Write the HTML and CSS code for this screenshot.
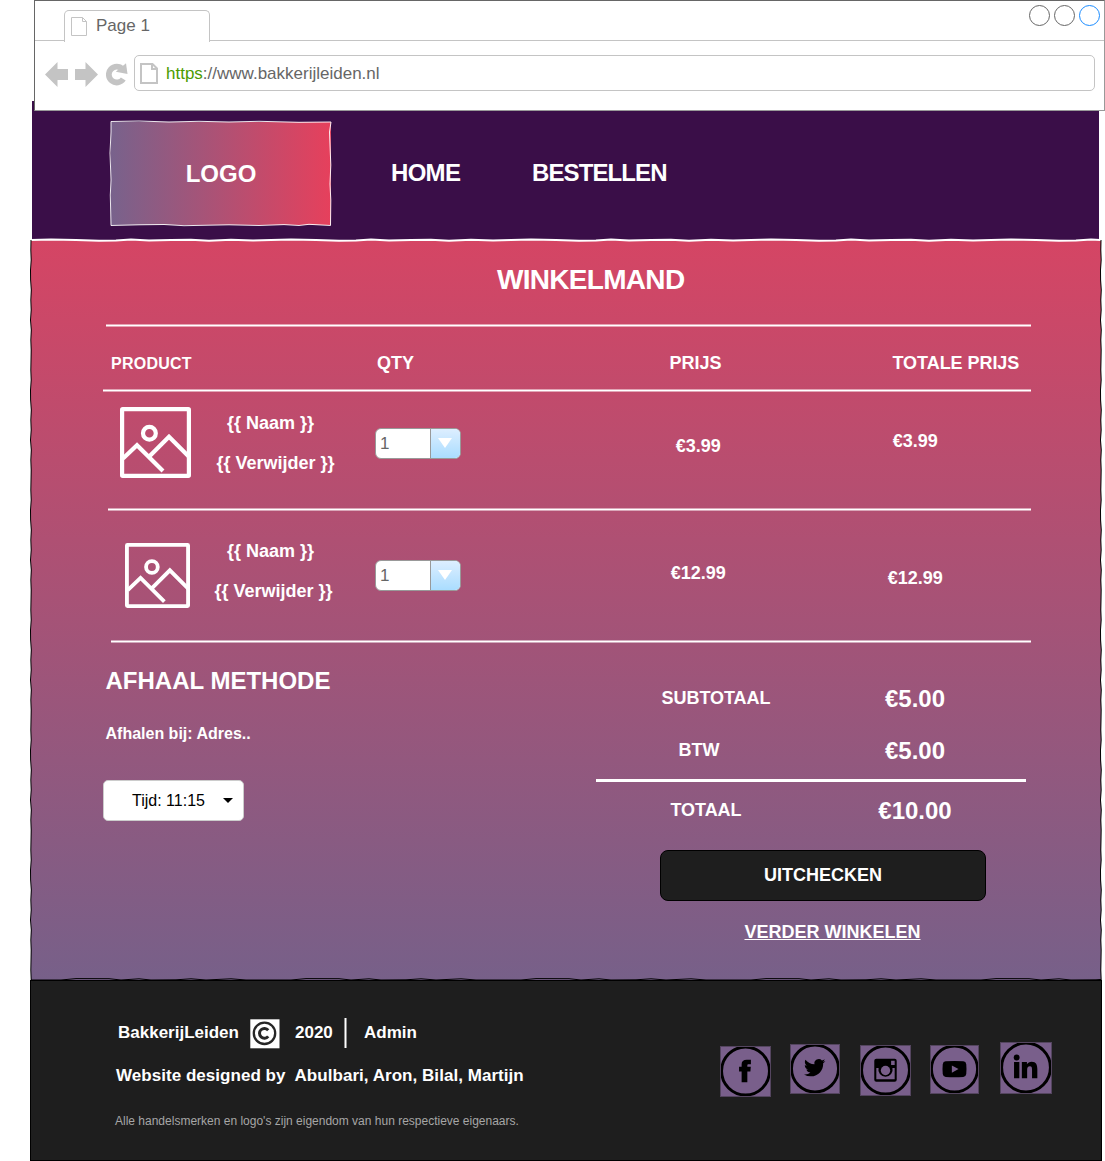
FILE: index.html
```html
<!DOCTYPE html>
<html lang="nl">
<head>
<meta charset="utf-8">
<title>Bakkerij Leiden - Winkelmand</title>
<link rel="stylesheet" href="styles.css">
</head>
<body>
<svg class="defs" width="0" height="0">
  <defs>
    <symbol id="picture" viewBox="0 0 71 71">
      <g fill="none" stroke="#fff" stroke-width="4.2">
        <rect x="2.1" y="2.1" width="66.8" height="66.8" rx=".6"/>
        <circle cx="29.4" cy="26.2" r="6.4"/>
        <path d="M3 51.5 17 38.2 43 64M29.5 49.2 49 29.8 69 49.8"/>
      </g>
    </symbol>
    <pattern id="rough-dark" width="5" height="120" patternUnits="userSpaceOnUse">
      <path d="M2 0 1.8 10 2.200 20 1.500 30 1.600 40 2.300 50 1.800 60 2.200 70 1.500 80 2.300 90 1.800 100 2.200 110 2 120" fill="none" stroke="#000" stroke-width="1"/>
    </pattern>
    <pattern id="rough-white" width="240" height="6" patternUnits="userSpaceOnUse">
      <path d="M0 3 20 2.6 45 2.9 68 3.8 85 3.6 100 2.6 118 3.4 140 3 160 2.8 178 3.7 200 2.7 222 3.5 240 3" fill="none" stroke="#fff" stroke-width="2"/>
    </pattern>
    <pattern id="rough-foot" width="230" height="3" patternUnits="userSpaceOnUse">
      <path d="M0 3 30 3 45 1.6 78 1.7 90 3 108 1.8 120 3 145 2.8 160 1.8 175 3 200 1.8 215 3 230 3" fill="none" stroke="#000" stroke-width="1"/>
    </pattern>
  </defs>
</svg>

<div class="browser">
  <div class="tabs">
    <div class="tab">
      <svg width="16" height="19" viewBox="0 0 16 19" fill="none" stroke="#c4c4c4"><path d="M.5.5h11l4 4v14H.5zM11.5.5v4h4"/></svg>
      <span>Page 1</span>
    </div>
    <div class="window-buttons">
      <i></i><i></i><i class="active"></i>
    </div>
  </div>
  <div class="toolbar">
    <svg class="arrow" width="23" height="25" viewBox="0 0 23 25"><path fill="#c4c4c4" d="M0 12.5 12.5 0v7H23v11H12.5v7z"/></svg>
    <svg class="arrow" width="23" height="25" viewBox="0 0 23 25"><path fill="#c4c4c4" d="M23 12.5 10.500 0v7H0v11h10.500v7z"/></svg>
    <svg class="reload" width="22" height="23" viewBox="0 0 22 23"><path d="M17.300 16A7.900 7.900 0 1 1 16.500 6.200" fill="none" stroke="#c4c4c4" stroke-width="5.800"/><path fill="#c4c4c4" d="M20 .300 21.500 11 9.800 8.700z"/></svg>
    <div class="address">
      <svg width="18" height="21" viewBox="0 0 18 21" fill="none" stroke="#c4c4c4" stroke-width="2"><path d="M1 1h11.500L17 5.500V20H1zM12 1v5h5"/></svg>
      <span><b>https</b>://www.bakkerijleiden.nl</span>
    </div>
  </div>
</div>

<div class="site">
  <header class="header">
    <a class="logo">LOGO
      <svg class="logo-edge" width="223" height="107" viewBox="0 0 223 107" fill="none" stroke="#fff" stroke-opacity=".9"><path d="M2 1.500 30 1 60 2 90 1.300 120 2 150 1.300 190 2.300 222 2 220.500 12 221.800 45 221 64 221.800 80 221.500 105.500 200 104.300 190 105.500 175 104.600 150 105.500 120 104.800 75 105.700 55 104.500 30 104.800 2 105.500 1.300 75 2 60 1 33 2 12z"/></svg>
    </a>
    <nav class="nav">
      <a class="home">HOME</a>
      <a class="order">BESTELLEN</a>
    </nav>
  </header>

  <main class="main">
    <svg class="edge-top" width="1070" height="6"><rect width="1070" height="6" fill="url(#rough-white)"/></svg>
    <svg class="edge-left" width="5" height="740"><rect width="5" height="740" fill="url(#rough-dark)"/></svg>
    <svg class="edge-right" width="5" height="740"><rect width="5" height="740" fill="url(#rough-dark)"/></svg>
    <svg class="edge-bottom" width="1070" height="3"><rect width="1070" height="3" fill="url(#rough-foot)"/></svg>

    <h1>WINKELMAND</h1>

    <section class="cart">
      <div class="rule rule-top"></div>
      <div class="row head">
        <span class="product">PRODUCT</span><span></span>
        <span class="h-qty">QTY</span>
        <span class="h-price">PRIJS</span>
        <span class="h-total">TOTALE PRIJS</span>
      </div>
      <div class="rule rule-head"></div>
      <div class="row item first">
        <svg class="thumb"><use href="#picture"/></svg>
        <div class="names"><span>{{ Naam }}</span><span class="remove">{{ Verwijder }}</span></div>
        <div class="qty"><span>1</span><i><svg width="14" height="10" viewBox="0 0 14 10"><path d="M0 0h14L7 10z" fill="#fff"/></svg></i></div>
        <span class="price">€3.99</span>
        <span class="total">€3.99</span>
      </div>
      <div class="rule rule-item"></div>
      <div class="row item second">
        <svg class="thumb"><use href="#picture"/></svg>
        <div class="names"><span>{{ Naam }}</span><span class="remove">{{ Verwijder }}</span></div>
        <div class="qty"><span>1</span><i><svg width="14" height="10" viewBox="0 0 14 10"><path d="M0 0h14L7 10z" fill="#fff"/></svg></i></div>
        <span class="price">€12.99</span>
        <span class="total">€12.99</span>
      </div>
      <div class="rule rule-last"></div>
    </section>

    <div class="bottom">
      <section class="pickup">
        <h2>AFHAAL METHODE</h2>
        <p>Afhalen bij: Adres..</p>
        <div class="time"><span>Tijd: 11:15</span><svg width="10" height="5" viewBox="0 0 10 5"><path d="M0 0h10L5 5z"/></svg></div>
      </section>
      <section class="summary">
        <div class="sum"><span>SUBTOTAAL</span><strong>€5.00</strong></div>
        <div class="sum tax"><span>BTW</span><strong>€5.00</strong></div>
        <div class="sum-rule"></div>
        <div class="sum grand"><span>TOTAAL</span><strong>€10.00</strong></div>
        <a class="checkout">UITCHECKEN</a>
        <a class="continue">VERDER WINKELEN</a>
      </section>
    </div>
  </main>

  <footer class="footer">
    <div class="credits">
      <div class="line">
        <span class="brand">BakkerijLeiden</span>
        <svg class="copy" width="30" height="30" viewBox="0 0 30 30"><path fill="#fff" d="M.300.300h29.200v29H.300z"/><g fill="none" stroke="#262626"><circle cx="14.500" cy="14.300" r="10.700" stroke-width="2.300"/><path d="M18.200 11.200A4.900 4.900 0 1 0 18.200 17.400" stroke-width="3"/></g></svg>
        <span class="year">2020</span>
        <i class="sep"></i>
        <span class="admin">Admin</span>
      </div>
      <div class="line authors"><span>Website designed by</span><span>Abulbari, Aron, Bilal, Martijn</span></div>
      <p>Alle handelsmerken en logo's zijn eigendom van hun respectieve eigenaars.</p>
    </div>
    <div class="social">
      <svg class="fb" viewBox="0 0 50 50"><circle cx="25" cy="24.500" r="23.500"/><path d="M21.200 35.500V25H18.700v-4.700h2.500V18c0-3 1.700-4.500 5-4.500H30.300v4.400h-2.200c-1 0-1.300.4-1.300 1.200v1.200H30.200l-.4 4.700h-3v10.500z"/></svg>
      <svg class="tw" viewBox="0 0 50 50"><circle cx="25" cy="24.500" r="23.500"/><path transform="translate(14 13) scale(.89)" d="M23.950 4.570a10 10 0 0 1-2.820.770 4.960 4.960 0 0 0 2.160-2.720c-.950.550-2.010.960-3.130 1.180a4.920 4.920 0 0 0-8.380 4.480C7.690 8.090 4.070 6.130 1.640 3.160a4.820 4.820 0 0 0-.670 2.480c0 1.710.870 3.210 2.190 4.100a4.900 4.900 0 0 1-2.230-.620v.060a4.920 4.920 0 0 0 3.950 4.830 5 5 0 0 1-2.210.080 4.940 4.940 0 0 0 4.600 3.420A9.870 9.870 0 0 1 0 19.540a13.990 13.990 0 0 0 7.550 2.210c9.050 0 14-7.500 14-13.980 0-.210 0-.420-.020-.630a9.940 9.940 0 0 0 2.460-2.550z"/></svg>
      <svg class="ig" viewBox="0 0 50 50"><circle cx="25" cy="24.500" r="23.500"/><path fill-rule="evenodd" d="M16 13.500h18a2 2 0 0 1 2 2v18.500a2 2 0 0 1-2 2H16a2 2 0 0 1-2-2V15.500a2 2 0 0 1 2-2zM30.500 15.500v4h3.500v-4zM16 22.500V33.500h18V22.500h-2.200a7 7 0 1 1-13.600 0z"/><circle class="lens" cx="25" cy="25" r="4.600"/></svg>
      <svg class="yt" viewBox="0 0 50 50"><circle cx="25" cy="24.500" r="23.500"/><path fill-rule="evenodd" d="M16 16.700q9-.8 18 0 2.700.2 3 3 .5 5 0 10-.3 2.600-3 2.900-9 .7-18 0-2.700-.3-3-2.900-.5-5 0-10 .3-2.800 3-3zM22.300 20.900v7.400l6.800-3.700z"/></svg>
      <svg class="li" viewBox="0 0 50 50"><circle cx="25" cy="24.500" r="23.500"/><path d="M13.500 19.300h5.100v15.500h-5.100zM21 19.300h4.900v2.100c1-1.700 2.400-2.500 4.500-2.500 4.500 0 5.500 2.900 5.500 7.100v8.800h-5.100v-7.900c0-2-.2-3.500-2-3.500-2.100 0-2.700 1.600-2.700 3.500v7.900H21z"/><circle class="dot" cx="16" cy="14.900" r="2.800"/></svg>
    </div>
  </footer>
</div>
</body>
</html>
```
FILE: styles.css
```css
* { box-sizing: border-box; }
body {
  margin: 0;
  width: 1105px;
  height: 1161px;
  overflow: hidden;
  background: #fff;
  color: #fff;
  font: bold 18px/20px "Liberation Sans", Arial, sans-serif;
}
h1, h2, p { margin: 0; }
svg { display: block; flex: none; }
span { white-space: pre; }
.defs { position: absolute; }

/* browser window */
.browser {
  position: relative;
  z-index: 1;
  width: 1071px;
  height: 111px;
  margin-left: 34px;
  background: #fff;
  border: 1px solid #666;
  border-bottom-color: #999;
  border-right-color: #999;
  color: #666;
  font-size: 17px;
  font-weight: normal;
}
.tabs { display: flex; justify-content: space-between; height: 40px; border-bottom: 1px solid #c4c4c4; }
.tab {
  display: flex;
  align-items: flex-start;
  gap: 9px;
  width: 146px;
  height: 32px;
  margin: 9px 0 0 29px;
  padding: 6px 6px 0;
  border: 1px solid #c4c4c4;
  border-bottom: 0;
  border-radius: 5px 5px 0 0;
  background: #fff;
}
.tab span { line-height: 18px; }
.window-buttons { display: flex; gap: 4px; padding: 4px 4.5px 0 0; }
.window-buttons i { width: 21px; height: 21px; border: 1px solid #666; border-radius: 50%; }
.window-buttons .active { border-color: #1a8cff; }
.toolbar { display: flex; align-items: flex-start; padding: 14px 9px 0 10px; }
.arrow { margin: 7px 7px 0 0; }
.reload { margin: 8px 6px 0 1px; }
.address {
  display: flex;
  align-items: flex-start;
  gap: 8px;
  flex: 1;
  height: 36px;
  padding: 8px 5px;
  border: 1px solid #c4c4c4;
  border-radius: 5px;
}
.address svg { margin-top: -1px; }
.address b { color: #4b9b00; font-weight: normal; }

/* site */
.site { width: 1072px; margin: -10px 0 0 30px; }
.header {
  display: flex;
  height: 139px;
  margin: 0 3px 0 2px;
  padding: 20px 0 0 78px;
  background: #3a0e48;
  font-size: 24px;
}
.logo {
  position: relative;
  width: 223px;
  height: 105px;
  padding: 43px 0 0 1px;
  background: linear-gradient(to right, #78628c, #e6405c) 2px 1px / 220px 103px no-repeat;
  text-align: center;
  margin-left: -1px;
}
.logo-edge { position: absolute; left: 0; top: -1px; }
.nav { display: flex; gap: 72px; padding: 42px 0 0 59px; }
.home { letter-spacing: -.7px; width: 69px; }
.order { letter-spacing: -.9px; }

.main {
  position: relative;
  height: 740px;
  margin: 0 1px;
  padding-top: 24px;
  background: linear-gradient(#d54564, #776089);
}
.edge-top { position: absolute; left: 0; top: -3px; }
.edge-left { position: absolute; left: -2px; top: 0; }
.edge-right { position: absolute; right: -3px; top: 0; }
.edge-bottom { position: absolute; left: 0; bottom: 0; }
h1 { padding-left: 466px; font-size: 28px; line-height: 32px; letter-spacing: -.7px; }

.cart { padding-top: 28px; }
.rule {
  height: 3px;
  margin-right: 70px;
  background: #fff padding-box;
  border: solid rgba(255,255,255,.5);
  border-width: 1px 0;
}
.rule-top { margin-left: 75px; }
.rule-head { margin-left: 72px; }
.rule-item { margin-left: 77px; }
.rule-last { margin-left: 80px; }
.row {
  display: grid;
  grid-template-columns: 102px 170px 290px 220px 1fr;
  align-items: start;
  padding-left: 72px;
}
.head { height: 62px; padding-top: 26px; }
.product { padding: 1px 0 0 8px; font-size: 16px; letter-spacing: .25px; }
.h-qty { padding-left: 2px; }
.h-price { padding-left: 4.500px; }
.h-total { padding-left: 7.500px; letter-spacing: -.05px; }
.names { display: grid; line-height: 40px; padding-left: 22px; }
.remove { margin-left: -10.500px; }
.first { height: 116px; }
.first .thumb { width: 71px; height: 71px; margin: 15px 0 0 17px; }
.first .names { margin-top: 11px; }
.first .qty { margin-top: 36px; }
.first .price { margin: 44px 0 0 10.700px; }
.first .total { margin: 39px 0 0 7.700px; }
.second { height: 129px; }
.second .thumb { width: 65px; height: 65px; margin: 32px 0 0 22px; }
.second .names { margin-top: 20px; }
.second .remove { margin-left: -12.500px; }
.second .qty { margin-top: 49px; }
.second .price { margin: 52px 0 0 5.700px; }
.second .total { margin: 57px 0 0 2.700px; }
.qty {
  display: flex;
  width: 86px;
  height: 31px;
  border: 1px solid #999;
  border-radius: 6px;
  background: #fff;
  overflow: hidden;
  color: #666;
  font-size: 17px;
  font-weight: normal;
}
.qty span { flex: 1; padding: 5px 0 0 4px; }
.qty i { width: 30px; padding: 9px 0 0 7px; border-left: 1px solid #999; background: linear-gradient(#ddeeff, #aaddff); }

.bottom { display: flex; }
.pickup { width: 565px; padding: 24px 0 0 72px; }
h2 { padding-left: 2.500px; font-size: 24px; line-height: 28px; }
.pickup p { padding: 29px 0 0 2.500px; font-size: 16px; }
.time {
  display: flex;
  align-items: center;
  width: 141px;
  height: 41px;
  margin-top: 36px;
  padding-left: 28px;
  gap: 18px;
  border: 1px solid #ccc;
  border-radius: 5px;
  background: #fff;
  color: #000;
  font-size: 16px;
  font-weight: normal;
}
.summary { width: 430px; padding-top: 42px; }
.sum { display: grid; grid-template-columns: 240px 158px; height: 52px; text-align: center; }
.sum span { padding-top: 3px; letter-spacing: -.05px; }
.sum strong { font-size: 24px; line-height: 28px; }
.tax span { padding-right: 34px; }
.sum-rule { height: 3px; margin-top: -10px; background: #fff; }
.grand { padding-top: 15px; height: 68px; }
.grand span { padding-right: 20px; }
.checkout {
  display: block;
  width: 326px;
  height: 51px;
  margin-left: 64px;
  padding-top: 14px;
  border: 1px solid #000;
  border-radius: 8px;
  background: #1e1e1e;
  text-align: center;
}
.continue { display: block; padding: 21px 0 0 148.500px; text-decoration: underline; }

/* footer */
.footer {
  display: flex;
  height: 181px;
  border: 1px solid #000;
  background: #1e1e1e;
  font-size: 17px;
}
.credits { width: 689px; padding: 38px 0 0 85px; }
.line { display: flex; height: 30px; }
.brand { width: 134px; padding: 4px 0 0 2px; }
.year { width: 67px; padding: 4px 0 0 15px; }
.sep { width: 3px; height: 30px; margin: -1px 0 0 -3px; background: #fff padding-box; border: solid #8f8f8f; border-width: 0 1px; }
.admin { padding: 4px 0 0 17px; }
.authors { padding-top: 17px; gap: 9px; height: 37px; letter-spacing: .04px; }
.credits p { padding: 25px 0 0; margin-left: -1px; color: #a6a6a6; font-size: 12px; font-weight: normal; }
.social { display: flex; align-items: flex-start; }
.social svg { width: 50px; height: 50px; background: #795f8b; outline: 1px solid #54455f; outline-offset: -1px; }
.social circle:first-child { fill: none; stroke: #000; stroke-width: 2.900px; }
.social .lens { fill: #795f8b; stroke: none; }
.social .fb { width: 51px; height: 51px; margin: 65px 19px 0 0; }
.social .tw { margin: 63px 20px 0 0; }
.social .ig { width: 51px; height: 51px; margin: 64px 19px 0 0; }
.social .yt { width: 49px; height: 49px; margin: 64px 21px 0 0; }
.social .li { width: 52px; height: 52px; margin-top: 61px; }
```
